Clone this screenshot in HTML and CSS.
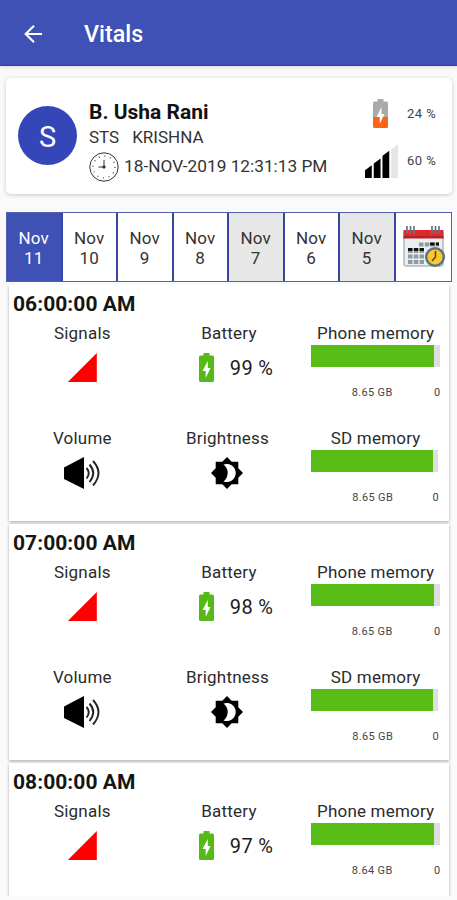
FILE: index.html
```html
<!DOCTYPE html>
<html lang="en">
<head>
<meta charset="utf-8">
<title>Vitals</title>
<link rel="stylesheet" href="styles.css">
</head>
<body>
<svg width="0" height="0" class="defs">
  <symbol id="battery" viewBox="0 0 15 29"><path fill="#55b917" d="M4.500 0h6v2.500H13.500Q15 2.500 15 4v23.500q0 1.500-1.500 1.500H1.500Q0 29 0 27.500V4Q0 2.500 1.500 2.500h3z"/><path fill="#fff" d="M8.800 8 3.500 18h3.200v7L11.500 15H8.800z"/></symbol>
  <symbol id="volume" viewBox="0 0 36 34"><path d="M0 11.500 20 1v32L0 23z"/><path fill="none" stroke="#222" stroke-width="1.900" d="M22.500 12q4.500 5 0 10.500M25.500 8.500q7.500 8.500 0 17.500M29 5q11 12 0 24.500"/></symbol>
  <symbol id="brightness" viewBox="0 0 32 32"><path d="M16 0l4.700 4.700h6.600v6.600L32 16l-4.700 4.700v6.600h-6.600L16 32l-4.700-4.700H4.700v-6.600L0 16l4.700-4.700V4.700h6.600z"/><path fill="#fff" d="M12.500 7.600a9 9 0 1 1 0 16.800 10.500 10.500 0 0 0 0-16.800z"/></symbol>
</svg>
<header class="appbar">
  <svg class="back" viewBox="0 0 20 20"><path d="M19 10H2M10.500 1.200 1.700 10l8.800 8.800"/></svg>
  <h1>Vitals</h1>
</header>
<section class="profile">
  <div class="avatar">S</div>
  <div class="who">
    <h2>B. Usha Rani</h2>
    <p class="role"><span>STS</span><span>KRISHNA</span></p>
    <p class="when">
      <svg class="clock" viewBox="0 0 30 30"><circle cx="15" cy="15" r="14.200"/><circle class="ticks" cx="15" cy="15" r="11"/><path d="M15 8v7H9.500"/><circle class="hub" cx="15" cy="15" r="1.200"/></svg>
      <span>18-NOV-2019 12:31:13 PM</span>
    </p>
  </div>
  <div class="levels">
    <div class="level">
      <svg class="low" viewBox="0 0 15 29"><path fill="#aaa" d="M4.500 0h6v2.500H13.500Q15 2.500 15 4v14H0V4Q0 2.500 1.500 2.500h3z"/><path fill="#fa6414" d="M0 18h15v9.500q0 1.500-1.500 1.500h-12Q0 29 0 27.500z"/><path fill="#fff" d="M8.500 8 3.500 18h3.200v7L11.500 15H8.500z"/></svg>
      <span>24 %</span>
    </div>
    <div class="level">
      <svg class="bars" viewBox="0 0 34 35"><path d="M0 35V27l7-5v13zM9 35V20l7-5v20zM18 35V12l7-5v28z"/><path fill="#e5e5e5" d="M27 35V6l7-6v35z"/></svg>
      <span>60 %</span>
    </div>
  </div>
</section>
<nav class="days">
  <div class="day on">Nov<br>11</div>
  <div class="day">Nov<br>10</div>
  <div class="day">Nov<br>9</div>
  <div class="day">Nov<br>8</div>
  <div class="day off">Nov<br>7</div>
  <div class="day">Nov<br>6</div>
  <div class="day off">Nov<br>5</div>
  <div class="day">
    <svg class="calendar" viewBox="0 0 42 44"><rect x="1" y="6" width="39" height="35" rx="1.500" fill="#eee" stroke="#8998a0"/><path fill="#df2929" d="M.5 5h40v8H.5z"/><path fill="#b91f26" d="M.5 11h40v2.500H.5z"/><g stroke="#65767e" stroke-width="1.700"><path d="M4 1v8M7.500 1v8M11 1v8M29 1v8M32.500 1v8M36 1v8"/></g><path stroke="#8d9ca4" stroke-width="4" stroke-dasharray="4.500 1.300" d="M16 19.500h20M5 26h16M5 31.500h16M5 37h16"/><path stroke="#111" stroke-width="3" stroke-dasharray="4.500 1.300" d="M5 24.500h16M27 19h9"/><circle cx="32" cy="32" r="8.800" fill="#fcc62c" stroke="#587586" stroke-width="2.500"/><path fill="none" stroke="#554322" stroke-width="1.500" d="M32.500 26v6l-3.500 4"/></svg>
  </div>
</nav>
<main class="list">
  <article class="card">
    <h3>06:00:00 AM</h3>
    <div class="grid">
      <div class="cell"><h4>Signals</h4><div class="signal"></div></div>
      <div class="cell"><h4>Battery</h4><div class="charge"><svg><use href="#battery"/></svg><span>99 %</span></div></div>
      <div class="cell"><h4 class="phone">Phone memory</h4><div class="meter"><i></i></div><p class="mem"><span>8.65 GB</span><span>0</span></p></div>
      <div class="cell"><h4>Volume</h4><svg class="volume"><use href="#volume"/></svg></div>
      <div class="cell"><h4 class="bright">Brightness</h4><svg class="brightness"><use href="#brightness"/></svg></div>
      <div class="cell sd"><h4>SD memory</h4><div class="meter"><i></i></div><p class="mem"><span>8.65 GB</span><span>0</span></p></div>
    </div>
  </article>
  <article class="card">
    <h3>07:00:00 AM</h3>
    <div class="grid">
      <div class="cell"><h4>Signals</h4><div class="signal"></div></div>
      <div class="cell"><h4>Battery</h4><div class="charge"><svg><use href="#battery"/></svg><span>98 %</span></div></div>
      <div class="cell"><h4 class="phone">Phone memory</h4><div class="meter"><i></i></div><p class="mem"><span>8.65 GB</span><span>0</span></p></div>
      <div class="cell"><h4>Volume</h4><svg class="volume"><use href="#volume"/></svg></div>
      <div class="cell"><h4 class="bright">Brightness</h4><svg class="brightness"><use href="#brightness"/></svg></div>
      <div class="cell sd"><h4>SD memory</h4><div class="meter"><i></i></div><p class="mem"><span>8.65 GB</span><span>0</span></p></div>
    </div>
  </article>
  <article class="card last">
    <h3>08:00:00 AM</h3>
    <div class="grid">
      <div class="cell"><h4>Signals</h4><div class="signal"></div></div>
      <div class="cell"><h4>Battery</h4><div class="charge"><svg><use href="#battery"/></svg><span>97 %</span></div></div>
      <div class="cell"><h4 class="phone">Phone memory</h4><div class="meter"><i></i></div><p class="mem"><span>8.64 GB</span><span>0</span></p></div>
    </div>
  </article>
</main>
</body>
</html>
```
FILE: styles.css
```css
* { box-sizing: border-box; }
body { margin: 0; height: 900px; overflow: hidden; background: #fafafa; color: #1c1c1c; font-family: Roboto, "Liberation Sans", sans-serif; }
h1, h2, h3, h4, p { margin: 0; }
svg { display: block; flex: none; }
.defs { display: none; }
.appbar { height: 66px; background: #3f51b5; border-bottom: 1px solid #31429c; box-shadow: 0 1px 4px #0002; display: flex; align-items: center; padding: 2px 0 0 24px; color: #fff; }
.back { width: 19px; height: 20px; margin-right: 41px; fill: none; stroke: #fff; stroke-width: 2.200; }
h1 { font-size: 23.300px; font-weight: 500; line-height: 30px; }
.profile { margin: 12px 5px 0 6px; height: 116px; background: #fff; border-radius: 5px; box-shadow: 0 1px 4px #0003; display: flex; padding-left: 12px; }
.avatar { width: 59px; height: 59px; margin: 28px 12px 0 0; border-radius: 50%; background: #3446b8; color: #fff; font-size: 29px; line-height: 62px; text-align: center; }
.who { width: 264px; padding-top: 21px; }
h2 { font-size: 21px; font-weight: 700; line-height: 26px; color: #111; }
.role { display: flex; gap: 13px; font-size: 17px; line-height: 25px; color: #333; }
.when { display: flex; gap: 5px; align-items: center; font-size: 17.250px; line-height: 33px; color: #333; white-space: nowrap; }
.clock { width: 30px; height: 30px; fill: none; stroke: #333; stroke-width: 1; }
.clock .ticks { stroke-width: 1.200; stroke-dasharray: 1 4.760; }
.clock .hub { fill: #333; }
.levels { padding-top: 20px; }
.level { display: flex; align-items: center; font-size: 13px; letter-spacing: .5px; color: #444; height: 30px; }
.level span { width: 34px; white-space: nowrap; }
.level + .level { height: 35px; margin-top: 15px; }
.level + .level span { margin-top: -1px; }
.low { width: 15px; height: 29px; margin: 0 19px 0 20px; }
.bars { width: 33px; height: 34px; margin: 0 9px 0 12px; }
.days { margin: 18px 5px 0 6px; height: 70px; border: 1px solid #5260b0; display: grid; grid-template-columns: repeat(8, 1fr); background: #fff; }
.day { border-right: 2px solid #3845a5; font-size: 17px; line-height: 20px; text-align: center; padding-top: 15px; letter-spacing: .2px; color: #333; }
.day:last-child { border-right: 0; padding-top: 0; }
.on { background: #3f51b5; color: #fff; }
.off { background: #e7e7e7; }
.calendar { width: 42px; height: 44px; margin: 12px 0 0 7px; }
.list { margin: 3px 0 0; padding: 0 8px 0 9px; height: 611px; overflow: hidden; }
.card { height: 236px; margin-bottom: 3px; background: #fff; box-shadow: 0 1px 3px #0005; }
.card.last { height: 133px; }
h3 { font-size: 21px; font-weight: 700; line-height: 38px; height: 37px; padding-left: 4px; letter-spacing: .05px; color: #151515; }
.grid { display: grid; grid-template-columns: repeat(3, 1fr); grid-auto-rows: 105px; }
.cell { display: flex; flex-direction: column; align-items: center; }
h4 { font-size: 17px; font-weight: 400; line-height: 23px; height: 23px; letter-spacing: .2px; white-space: nowrap; color: #2b2b2b; }
.signal { width: 29px; height: 29px; margin-top: 8px; background: #f00; clip-path: polygon(0 100%, 100% 0, 100% 100%); }
.charge { display: flex; gap: 16px; align-items: center; margin: 8px 0 0 14px; height: 29px; font-size: 20px; letter-spacing: .3px; }
.charge svg { width: 15px; height: 29px; }
.charge span { padding-top: 1px; }
.meter { width: 129px; height: 22px; background: #dedede; }
.meter i { display: block; width: 123px; height: 22px; background: #59bd17; }
.mem { width: 130px; display: flex; justify-content: space-between; padding-left: 41px; margin-top: 19px; font-size: 11px; letter-spacing: .35px; line-height: 14px; color: #444; }
.sd .meter { width: 127px; margin-right: 2px; }
.sd .mem { width: 128px; margin-right: 1px; }
.sd .meter i { width: 122px; }
.volume { width: 36px; height: 34px; margin-top: 6px; }
.brightness { width: 32px; height: 32px; margin: 7px 3px 0 0; }
.bright { margin-right: 3px; }
```
